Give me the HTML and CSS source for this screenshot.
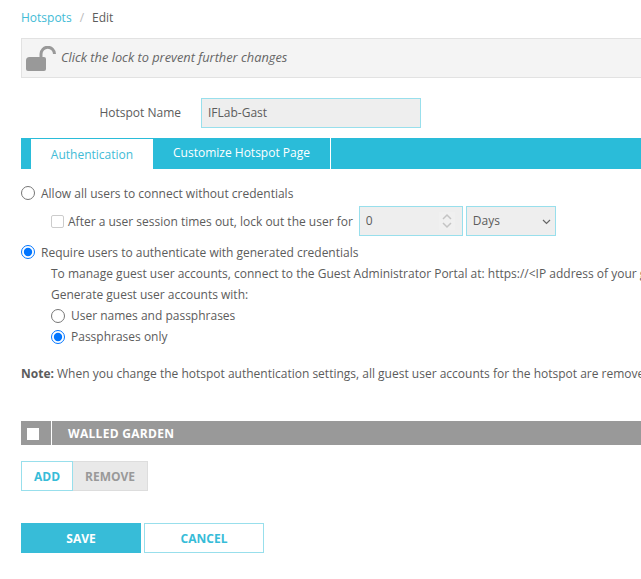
FILE: index.html
```html
<!DOCTYPE html>
<html lang="en">
<head>
<meta charset="utf-8">
<title>Hotspots / Edit</title>
<link rel="stylesheet" href="styles.css">
</head>
<body>
<main class="page">
  <nav class="crumbs"><a class="crumb-link">Hotspots</a><span class="crumb-sep">/</span><span class="crumb-current">Edit</span></nav>
  <div class="lockbar">
    <svg class="lock-icon" width="30" height="25" viewBox="0 0 30 25" aria-hidden="true">
      <path d="M3.5 11H18a2 2 0 0 1 2 2v10a2 2 0 0 1-2 2H2a2 2 0 0 1-2-2v-8.500a3.500 3.500 0 0 1 3.500-3.500z" fill="#999"/>
      <path d="M15 12V8a6.750 6.750 0 0 1 13.500 0" fill="none" stroke="#999" stroke-width="3"/>
    </svg>
    <em class="lock-text">Click the lock to prevent further changes</em>
  </div>
  <div class="name-row">
    <label class="name-label" for="hotspot-name">Hotspot Name</label>
    <input class="field name-input" id="hotspot-name" type="text" value="IFLab-Gast">
  </div>
  <div class="tabs">
    <a class="tab tab-active">Authentication</a>
    <a class="tab tab-plain">Customize Hotspot Page</a>
  </div>
  <section class="auth">
    <label class="opt"><input type="radio" name="auth"><span>Allow all users to connect without credentials</span></label>
    <div class="lockout">
      <label class="check-label"><input class="check" type="checkbox"><span>After a user session times out, lock out the user for</span></label>
      <span class="num-wrap">
        <input class="field num-input" type="number" value="0">
        <svg class="spin-icon" width="16" height="18" viewBox="0 0 16 18" aria-hidden="true">
          <path d="M4 7l4-4 4 4M4 11l4 4 4-4" fill="none" stroke="#c4c4c4" stroke-width="1.500"/>
        </svg>
      </span>
      <span class="select-wrap">
        <select class="field unit-select"><option>Days</option></select>
        <svg class="select-icon" width="9" height="6" viewBox="0 0 9 6" aria-hidden="true">
          <path d="M1 1l3.500 3.500L8 1" fill="none" stroke="#666" stroke-width="1.200"/>
        </svg>
      </span>
    </div>
    <label class="opt opt-req"><input type="radio" name="auth" checked><span>Require users to authenticate with generated credentials</span></label>
    <div class="sub">
      <p class="sub-line">To manage guest user accounts, connect to the Guest Administrator Portal at: https://&lt;IP address of your guest portal&gt;</p>
      <p class="sub-line">Generate guest user accounts with:</p>
      <label class="opt sub-line"><input type="radio" name="kind"><span>User names and passphrases</span></label>
      <label class="opt sub-line"><input type="radio" name="kind" checked><span>Passphrases only</span></label>
    </div>
  </section>
  <p class="note"><strong>Note:</strong> When you change the hotspot authentication settings, all guest user accounts for the hotspot are removed.</p>
  <div class="table-head">
    <span class="head-check"><span class="white-box"></span></span>
    <span class="head-title">WALLED GARDEN</span>
  </div>
  <div class="table-actions">
    <button class="btn btn-add">ADD</button><button class="btn btn-remove">REMOVE</button>
  </div>
  <div class="form-actions">
    <button class="btn btn-save">SAVE</button>
    <button class="btn btn-cancel">CANCEL</button>
  </div>
</main>
</body>
</html>
```

FILE: styles.css
```css
html, body { margin: 0; padding: 0; overflow: hidden; background: #fff; }
body { font-family: "Open Sans", sans-serif; font-size: 12px; color: #5c5c5c; }
.page { width: 900px; height: 579px; padding-left: 21px; box-sizing: border-box; white-space: nowrap; }
.crumbs { display: flex; height: 34px; margin-bottom: 4px; align-items: center; box-sizing: border-box; }
.crumb-link { color: #42bbd6; }
.crumb-sep { color: #bbb; margin: 0 8px; }
.lockbar { display: flex; align-items: center; height: 40px; box-sizing: border-box; background: #f4f4f4; border: 1px solid #e2e2e2; padding-left: 4px; }
.lock-icon { margin-right: 5px; }
.lock-text { color: #666; font-size: 12.8px; padding-bottom: 2px; }
.name-row { display: flex; align-items: center; margin-top: 20px; height: 30px; }
.name-label { width: 180px; text-align: right; padding: 0 20px 2px 0; box-sizing: border-box; }
.field { font-family: inherit; font-size: 12px; color: #5c5c5c; background: #eee; border: 1px solid #98dfec; border-radius: 0; box-sizing: border-box; outline: none; }
.name-input { width: 220px; height: 30px; padding: 0 6px 2px; }
.tabs { display: flex; height: 31px; margin-top: 10px; background: #2abcd9; padding-left: 10px; box-sizing: border-box; }
.tab { display: flex; align-items: center; justify-content: center; }
.tab-active { width: 122px; margin-top: 1px; background: #fff; color: #42bbd6; }
.tab-plain { width: 178px; color: #fff; border-right: 1px solid #fff; padding-bottom: 2px; box-sizing: border-box; }
.auth { margin-top: 15px; }
.opt { display: flex; align-items: center; height: 18px; }
.opt input { margin: 0 6px 0 0; width: 14px; height: 14px; }
.lockout { display: flex; align-items: center; margin: 4px 0 0 30px; height: 30px; }
.check-label { display: flex; align-items: center; }
.check { appearance: none; margin: 0 4px 0 0; width: 13px; height: 13px; background: #fff; border: 1px solid #ccc; border-radius: 2px; }
.num-wrap { position: relative; display: flex; margin-left: 6px; }
.num-input { width: 104px; height: 30px; padding: 0 6px 2px; appearance: textfield; }
.num-input::-webkit-inner-spin-button { appearance: none; }
.spin-icon { position: absolute; right: 8px; top: 6px; background: #f0f0f0; }
.select-wrap { position: relative; display: flex; margin-left: 3px; }
.unit-select { appearance: none; width: 90px; height: 30px; padding: 0 6px 2px; }
.select-icon { position: absolute; right: 5px; top: 13px; pointer-events: none; }
.opt-req { margin-top: 7px; }
.sub { margin: 2px 0 0 30px; }
.sub-line { margin: 0; height: 21px; line-height: 21px; }
.note { margin: 18px 0 0; height: 18px; line-height: 18px; }
.table-head { display: flex; align-items: center; height: 24px; margin-top: 38px; background: #999; color: #fff; }
.head-check { display: flex; align-items: center; padding: 2px 0 0 6px; width: 31px; height: 24px; box-sizing: border-box; border-right: 1px solid #fff; }
.white-box { width: 12px; height: 12px; box-sizing: border-box; background: #fff; }
.head-title { margin-left: 16px; font-weight: 700; font-size: 12px; letter-spacing: 0.3px; }
.table-actions { display: flex; margin-top: 16px; }
.btn { font-family: inherit; font-size: 12px; font-weight: 700; box-sizing: border-box; border-radius: 0; padding: 0; }
.btn-add { width: 52px; height: 30px; background: #fff; color: #37bcd8; border: 1px solid #98dfec; }
.btn-remove { width: 75px; height: 30px; background: #e9e9e9; color: #999; border: 1px solid #ddd; border-left: 0; }
.form-actions { display: flex; gap: 3px; margin-top: 32px; }
.btn-save { width: 120px; height: 30px; background: #37bcd8; color: #fff; border: 0; }
.btn-cancel { width: 120px; height: 30px; background: #fff; color: #37bcd8; border: 1px solid #98dfec; }
```
